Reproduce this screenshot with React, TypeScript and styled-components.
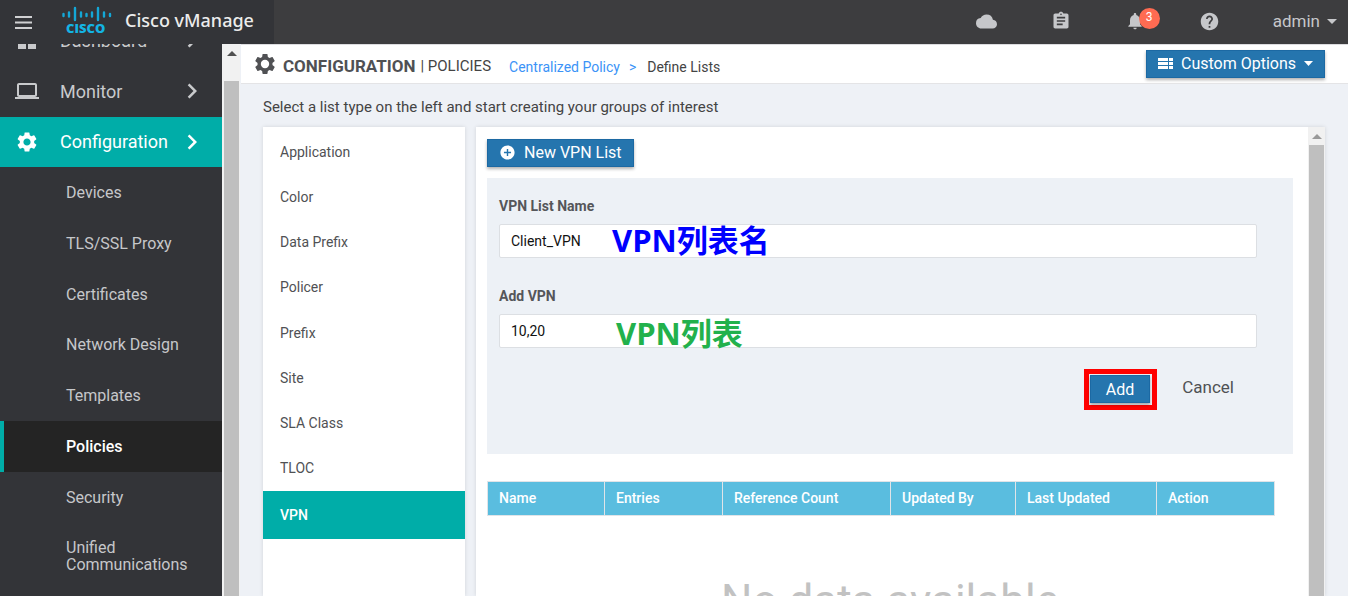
import React from "react";
import styled, { createGlobalStyle } from "styled-components";
import {
  MdCloud,
  MdAssignment,
  MdNotifications,
  MdHelp,
  MdArrowDropDown,
  MdSettings,
  MdChevronRight,
  MdAddCircle,
  MdDashboard,
  MdLaptop,
} from "react-icons/md";

const Global = createGlobalStyle`
  *, *::before, *::after { box-sizing: border-box; }
  body { margin: 0; background: #eef1f6; font-family: Roboto, "Liberation Sans", sans-serif; color: #444; }
  button, input { font-family: inherit; }
  a { text-decoration: none; }
`;

const Page = styled.div`
  display: flex;
  flex-direction: column;
  height: 100vh;
  overflow: hidden;
`;

const Header = styled.header`
  display: flex;
  flex: none;
  height: 44px;
  background: #3d3d3f;
  color: #c6c7ca;
  position: relative;
  z-index: 1;
`;

const Brand = styled.div`
  display: flex;
  align-items: center;
  width: 274px;
  padding: 0 0 4px 15px;
  background: #333438;
`;

const MenuButton = styled.button`
  display: flex;
  width: 17px;
  padding: 4px 0 0;
  border: 0;
  background: none;
`;

const LogoSlot = styled.div`
  display: flex;
  margin: 0 12px 0 29px;
`;

const BrandName = styled.span`
  font: 500 18px/24px "Noto Sans", "Open Sans", sans-serif;
  color: #ececec;
`;

const HeaderTools = styled.div`
  display: flex;
  flex: 1;
  align-items: center;
  justify-content: flex-end;
  padding-bottom: 2px;
`;

const ToolButton = styled.button<{ $gap: number }>`
  display: flex;
  position: relative;
  padding: 0;
  margin-right: ${(p) => p.$gap}px;
  border: 0;
  background: none;
  color: inherit;
`;

const Badge = styled.span`
  position: absolute;
  left: 14px;
  top: -3px;
  width: 21px;
  height: 21px;
  border-radius: 50%;
  background: #ff6b52;
  color: #fff;
  font-size: 12px;
  line-height: 18px;
  text-align: center;
`;

const UserButton = styled.button`
  display: flex;
  align-items: center;
  padding: 0 4px 0 0;
  border: 0;
  background: none;
  color: inherit;
  font-size: 17px;
`;

const Body = styled.div`
  display: flex;
  flex: 1;
  min-height: 0;
`;

const Sidebar = styled.nav`
  flex: none;
  width: 223px;
  overflow: hidden;
  background: #333438;
  border-right: 1px solid #f1f1f1;
`;

const MenuList = styled.div`
  margin-top: -29px;
`;

const Section = styled.a<{ $active?: boolean }>`
  display: flex;
  align-items: center;
  height: ${(p) => (p.$active ? 50 : 51)}px;
  padding: 0 15px 1px;
  font-size: 18px;
  color: ${(p) => (p.$active ? "#fff" : "#c9cacc")};
  background: ${(p) => (p.$active ? "#00ada8" : "transparent")};
`;

const SectionLabel = styled.span`
  flex: 1;
  padding-left: 21px;
`;

const SubMenu = styled.div`
  display: grid;
  grid-auto-rows: minmax(0, 1fr);
  height: 406px;
`;

const SubItem = styled.a<{ $active?: boolean }>`
  display: block;
  padding: 17px 20px 16px ${(p) => (p.$active ? 62 : 66)}px;
  border-left: ${(p) => (p.$active ? "4px solid #00ada8" : "0")};
  font-size: 16px;
  line-height: 17px;
  font-weight: ${(p) => (p.$active ? 500 : 400)};
  color: ${(p) => (p.$active ? "#fff" : "#c6c7ca")};
  background: ${(p) => (p.$active ? "#242424" : "transparent")};
`;

const Scrollbar = styled.div`
  flex: none;
  display: flex;
  flex-direction: column;
  align-items: center;
  width: 17px;
  background: #f1f1f1;
`;

const Thumb = styled.div`
  flex: 1;
  width: 15px;
  background: #bfbfbf;
`;

const ScrollArrow = styled.div<{ $height: number; $color: string }>`
  display: flex;
  justify-content: center;
  height: ${(p) => p.$height}px;
  color: ${(p) => p.$color};

  svg {
    flex: none;
    display: block;
    margin-top: 7px;
  }
`;

const Main = styled.main`
  display: flex;
  flex: 1;
  flex-direction: column;
  min-width: 0;
  padding-left: 1px;
`;

const TitleBar = styled.div`
  display: flex;
  flex: none;
  align-items: center;
  height: 40px;
  padding: 0 23px 0 12px;
  background: #fff;
  border-top: 1px solid #dcdcdf;
  border-bottom: 1px solid #e4e4e6;
`;

const Title = styled.h1`
  margin: 0 5px 0 6px;
  padding-top: 4px;
  font-size: 17px;
  line-height: 24px;
  font-weight: 700;
  color: #505154;
`;

const Subtitle = styled.span`
  padding-top: 4px;
  font-size: 15px;
  line-height: 24px;
`;

const Crumbs = styled.div`
  display: flex;
  flex: 1;
  gap: 9px;
  margin-left: 18px;
  padding-top: 6px;
  font-size: 14px;
  line-height: 20px;
  color: #3b93f7;
`;

const Crumb = styled.a`
  color: #3b93f7;
`;

const Current = styled.span`
  padding-left: 2px;
  color: #444;
`;

const PrimaryButton = styled.button`
  display: flex;
  align-items: center;
  height: 28px;
  padding: 0 11px 2px;
  gap: 8px;
  border: 1px solid #1c69a3;
  background: #2575ae;
  box-shadow: 0 2px 3px rgba(0, 0, 0, 0.3);
  color: #fff;
  font-size: 16px;
`;

const Intro = styled.p`
  margin: 0;
  padding: 13px 22px 10px;
  font-size: 15px;
  line-height: 20px;
  color: #444;
`;

const Columns = styled.div`
  display: flex;
  flex: 1;
  gap: 11px;
  min-height: 0;
  padding: 0 23px 0 22px;
`;

const TypeList = styled.div`
  flex: none;
  width: 202px;
  padding-top: 2px;
  background: #fff;
  box-shadow: 0 0 4px rgba(0, 0, 0, 0.12);
`;

const TypeRows = styled.div`
  display: grid;
  grid-template-rows: repeat(8, minmax(0, 1fr)) 48px;
  height: 410px;
`;

const TypeItem = styled.a<{ $active?: boolean }>`
  display: flex;
  align-items: center;
  padding: 0 17px;
  font-size: 14px;
  font-weight: ${(p) => (p.$active ? 500 : 400)};
  color: ${(p) => (p.$active ? "#fff" : "#505154")};
  background: ${(p) => (p.$active ? "#00ada8" : "transparent")};
`;

const Panel = styled.section`
  display: flex;
  flex: 1;
  min-width: 0;
  background: #fff;
  box-shadow: 0 0 4px rgba(0, 0, 0, 0.12);
`;

const PanelContent = styled.div`
  flex: 1;
  min-width: 0;
  overflow: hidden;
  padding: 12px 15px 0 11px;
`;

const Form = styled.form`
  margin: 11px 0 27px;
  padding: 11px 36px 44px 12px;
  background: #edf1f6;
`;

const Field = styled.div`
  position: relative;
  margin-bottom: 21px;
`;

const Label = styled.label`
  display: block;
  padding: 7px 0 8px;
  font-size: 14px;
  line-height: 20px;
  font-weight: 700;
  color: #55565a;
`;

const TextInput = styled.input`
  display: block;
  width: 100%;
  height: 34px;
  padding: 0 11px;
  border: 1px solid #dcdfe3;
  border-radius: 2px;
  background: #fff;
  color: #111;
  font-size: 14px;
`;

const Note = styled.span<{ $color: string; $left: number; $bottom: number }>`
  position: absolute;
  left: ${(p) => p.$left}px;
  bottom: ${(p) => p.$bottom}px;
  font: 700 31px/40px "Open Sans", "Noto Sans CJK SC", sans-serif;
  color: ${(p) => p.$color};
`;

const Actions = styled.div`
  display: flex;
  justify-content: flex-end;
  gap: 25px;
  padding-right: 23px;
`;

const Highlight = styled.div`
  padding: 1px 2px 2px 1px;
  border: 5px solid #f00;
`;

const AddButton = styled(PrimaryButton)`
  padding: 0 15px;
`;

const CancelButton = styled.button`
  padding: 0 0 5px;
  border: 0;
  background: none;
  color: #505154;
  font-size: 17px;
`;

const Table = styled.table`
  width: calc(100% - 18px);
  table-layout: fixed;
  border-collapse: collapse;
`;

const HeadCell = styled.th<{ $width: number }>`
  width: ${(p) => p.$width}px;
  height: 34px;
  padding: 0 11px 1px;
  border: 1px solid #e0e4e8;
  background: #5abddf;
  color: #fff;
  font-size: 14px;
  font-weight: 500;
  text-align: left;
`;

const Empty = styled.p`
  margin: 53px 0 0;
  font-size: 44px;
  line-height: 64px;
  text-align: center;
  color: #c2c2c2;
`;

const CiscoLogo = () => (
  <svg width="52" height="32" viewBox="0 0 52 32" aria-label="Cisco" role="img" fill="#14b4e4">
    <path
      d="M2.500 10v2M8 8.500v4M14 4v12M20 8.500v4M25.500 10v2M31 8.500v4M37 4v12M43 8.500v4M49 10v2"
      stroke="#14a7d6"
      strokeWidth="2.400"
      strokeLinecap="round"
    />
    <text x="5" y="29" fontFamily="Open Sans, sans-serif" fontWeight="800" fontSize="13">CISCO</text>
  </svg>
);

const MenuIcon = () => (
  <svg width="17" height="13" viewBox="0 0 17 13">
    <path d="M0 1h17M0 6.500h17M0 12h17" stroke="#d0d0d2" strokeWidth="2" />
  </svg>
);

const OptionsIcon = () => (
  <svg width="15" height="11" viewBox="0 0 15 11" fill="#fff">
    <path d="M0 0h10v3H0zM11 0h4v3h-4zM0 4h10v3H0zM11 4h4v3h-4zM0 8h10v3H0zM11 8h4v3h-4z" />
  </svg>
);

const Caret = () => (
  <svg width="9" height="5" viewBox="0 0 9 5" fill="#fff">
    <path d="M0 0h9L4.500 5z" />
  </svg>
);

const ArrowUp = () => (
  <svg width="10" height="5" viewBox="0 0 10 5" fill="currentColor">
    <path d="M0 5h10L5 0z" />
  </svg>
);

const GearIcon = () => (
  <svg width="24" height="24" viewBox="0 0 24 24">
    <path
      fill="#505154"
      d="M19.430 12.980c.04-.32.07-.64.07-.98s-.03-.66-.07-.98l2.110-1.650c.19-.15.24-.42.12-.64l-2-3.460c-.12-.22-.39-.3-.61-.22l-2.490 1c-.52-.4-1.080-.73-1.690-.98l-.38-2.650C14.460 2.180 14.250 2 14 2h-4c-.25 0-.46.18-.49.42l-.38 2.650c-.61.25-1.170.59-1.690.98l-2.490-1c-.23-.09-.49 0-.61.22l-2 3.460c-.13.22-.07.49.12.64l2.110 1.650c-.04.32-.07.65-.07.98s.03.66.07.98l-2.110 1.650c-.19.15-.24.42-.12.64l2 3.460c.12.22.39.3.61.22l2.490-1c.52.4 1.080.73 1.690.98l.38 2.650c.03.24.24.42.49.42h4c.25 0 .46-.18.49-.42l.38-2.650c.61-.25 1.170-.59 1.690-.98l2.490 1c.23.09.49 0 .61-.22l2-3.460c.12-.22.07-.49-.12-.64l-2.110-1.650z"
    />
    <circle cx="12" cy="12" r="4.200" fill="#fff" />
  </svg>
);

const subItems = ["Devices", "TLS/SSL Proxy", "Certificates", "Network Design", "Templates", "Policies", "Security", "Unified Communications"];
const listTypes = ["Application", "Color", "Data Prefix", "Policer", "Prefix", "Site", "SLA Class", "TLOC", "VPN"];
const columns: [string, number][] = [
  ["Name", 117],
  ["Entries", 118],
  ["Reference Count", 168],
  ["Updated By", 125],
  ["Last Updated", 141],
  ["Action", 118],
];

export default function App() {
  return (
    <Page>
      <Global />
      <Header>
        <Brand>
          <MenuButton aria-label="Menu"><MenuIcon /></MenuButton>
          <LogoSlot><CiscoLogo /></LogoSlot>
          <BrandName>Cisco vManage</BrandName>
        </Brand>
        <HeaderTools>
          <ToolButton $gap={54} aria-label="Cloud"><MdCloud size={21} /></ToolButton>
          <ToolButton $gap={54} aria-label="Tasks"><MdAssignment size={20} /></ToolButton>
          <ToolButton $gap={54} aria-label="Alarms">
            <MdNotifications size={20} />
            <Badge>3</Badge>
          </ToolButton>
          <ToolButton $gap={53} aria-label="Help"><MdHelp size={21} /></ToolButton>
          <UserButton>admin <MdArrowDropDown size={24} /></UserButton>
        </HeaderTools>
      </Header>
      <Body>
        <Sidebar>
          <MenuList>
            <Section href="#"><MdDashboard size={24} /><SectionLabel>Dashboard</SectionLabel><MdChevronRight size={30} /></Section>
            <Section href="#"><MdLaptop size={24} /><SectionLabel>Monitor</SectionLabel><MdChevronRight size={30} /></Section>
            <Section href="#" $active><MdSettings size={24} /><SectionLabel>Configuration</SectionLabel><MdChevronRight size={30} /></Section>
            <SubMenu>
              {subItems.map((name) => (
                <SubItem key={name} href="#" $active={name === "Policies"}>{name}</SubItem>
              ))}
            </SubMenu>
          </MenuList>
        </Sidebar>
        <Scrollbar>
          <ScrollArrow $height={37} $color="#505050"><ArrowUp /></ScrollArrow>
          <Thumb />
        </Scrollbar>
        <Main>
          <TitleBar>
            <GearIcon />
            <Title>CONFIGURATION</Title>
            <Subtitle>| POLICIES</Subtitle>
            <Crumbs>
              <Crumb href="#">Centralized Policy</Crumb>
              <span>&gt;</span>
              <Current>Define Lists</Current>
            </Crumbs>
            <PrimaryButton><OptionsIcon />Custom Options<Caret /></PrimaryButton>
          </TitleBar>
          <Intro>Select a list type on the left and start creating your groups of interest</Intro>
          <Columns>
            <TypeList>
              <TypeRows>
                {listTypes.map((name) => (
                  <TypeItem key={name} href="#" $active={name === "VPN"}>{name}</TypeItem>
                ))}
              </TypeRows>
            </TypeList>
            <Panel>
              <PanelContent>
                <PrimaryButton><MdAddCircle size={17} />New VPN List</PrimaryButton>
                <Form onSubmit={(e) => e.preventDefault()}>
                  <Field>
                    <Label htmlFor="list-name">VPN List Name</Label>
                    <TextInput id="list-name" defaultValue="Client_VPN" />
                    <Note $color="#0000fe" $left={113} $bottom={-2}>VPN列表名</Note>
                  </Field>
                  <Field>
                    <Label htmlFor="vpn-ids">Add VPN</Label>
                    <TextInput id="vpn-ids" defaultValue="10,20" />
                    <Note $color="#22b14c" $left={117} $bottom={-5}>VPN列表</Note>
                  </Field>
                  <Actions>
                    <Highlight><AddButton type="submit">Add</AddButton></Highlight>
                    <CancelButton type="button">Cancel</CancelButton>
                  </Actions>
                </Form>
                <Table>
                  <thead>
                    <tr>
                      {columns.map(([name, width]) => (
                        <HeadCell key={name} $width={width}>{name}</HeadCell>
                      ))}
                    </tr>
                  </thead>
                </Table>
                <Empty>No data available</Empty>
              </PanelContent>
              <Scrollbar>
                <ScrollArrow $height={18} $color="#999"><ArrowUp /></ScrollArrow>
                <Thumb />
              </Scrollbar>
            </Panel>
          </Columns>
        </Main>
      </Body>
    </Page>
  );
}
